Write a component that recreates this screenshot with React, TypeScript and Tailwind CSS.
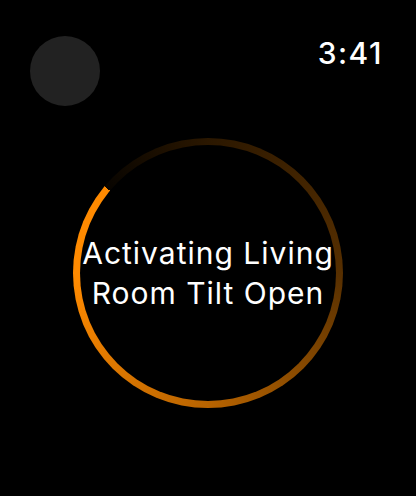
export default function App() {
  return (
    <main
      className="h-[496px] w-[416px] overflow-hidden bg-black text-white"
      style={{ fontFamily: 'Inter, "Noto Sans", sans-serif' }}
    >
      <header className="flex items-start justify-between pl-[30px] pr-[33px] pt-[35px]">
        <div className="mt-[1px] h-[70px] w-[70px] rounded-full bg-[#222222]" />
        <span className="text-[30px] font-medium leading-[36px] tracking-[1.5px]">3:41</span>
      </header>

      <section className="mt-[32px] flex justify-center">
        <div className="relative h-[270px] w-[270px] rounded-full bg-[conic-gradient(from_310deg,rgba(255,138,0,0.03)_0%,rgba(255,138,0,0.17)_14%,rgba(255,138,0,0.34)_39%,rgba(255,138,0,0.72)_64%,#ff8a00_88%,#ff8a00_100%)]">
          <div className="absolute inset-[7px] flex items-center justify-center rounded-full bg-black">
            <p className="whitespace-nowrap text-center text-[30px] leading-[40px] tracking-[1px]">
              Activating Living
              <br />
              Room Tilt Open
            </p>
          </div>
        </div>
      </section>
    </main>
  );
}
